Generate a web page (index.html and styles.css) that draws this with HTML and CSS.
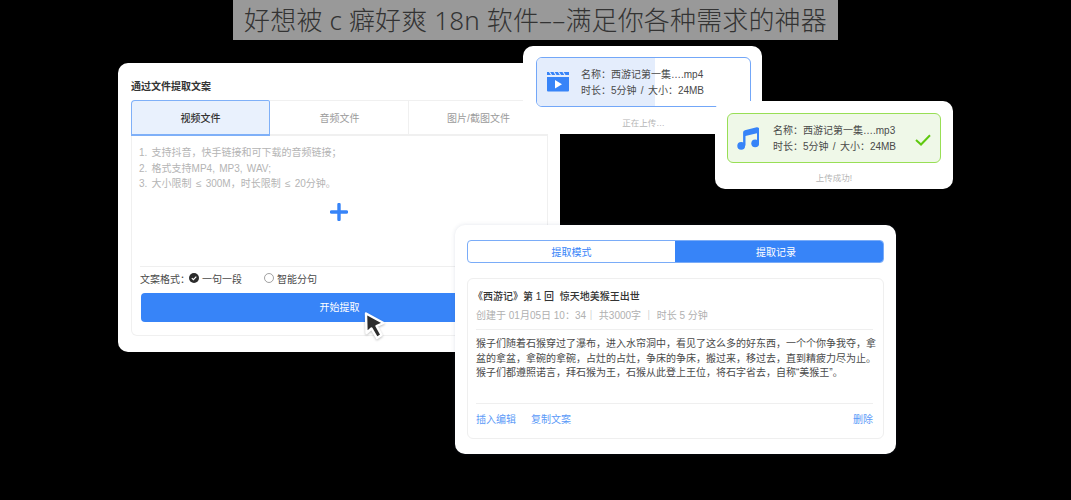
FILE: index.html
```html
<!DOCTYPE html>
<html lang="zh">
<head>
<meta charset="utf-8">
<title>软件</title>
<link rel="stylesheet" href="styles.css">
</head>
<body>
<div class="canvas">
  <div class="banner"><h1 class="banner-text">好想被 c 癖好爽 18n 软件––满足你各种需求的神器</h1></div>

  <section class="card card-main">
    <h2 class="main-title">通过文件提取文案</h2>
    <div class="panel">
      <div class="tabs">
        <div class="tab tab-active">视频文件</div>
        <div class="tab">音频文件</div>
        <div class="tab">图片/截图文件</div>
      </div>
      <div class="panel-body">
        <ol class="hints">
          <li>1. 支持抖音，快手链接和可下载的音频链接；</li>
          <li>2. 格式支持MP4, MP3, WAV;</li>
          <li>3. 大小限制 ≤ 300M，时长限制 ≤ 20分钟。</li>
        </ol>
        <div class="plus-area">
          <svg class="plus" width="18" height="18" viewBox="0 0 18 18"><path d="M9 1.500v15M1.500 9h15" stroke="#3784f8" stroke-width="3.400" stroke-linecap="round" fill="none"/></svg>
        </div>
        <div class="format">
          <span class="format-label">文案格式：</span>
          <span class="radio-item radio-first">
            <svg width="10" height="10" viewBox="0 0 10 10"><circle cx="5" cy="5" r="5" fill="#2b2b2b"/><path d="M2.800 5.100l1.600 1.600 2.900-3" stroke="#fff" stroke-width="1.200" fill="none"/></svg>
            一句一段
          </span>
          <span class="radio-item">
            <svg width="10" height="10" viewBox="0 0 10 10"><circle cx="5" cy="5" r="4.500" fill="#fff" stroke="#8a8a8a" stroke-width=".8"/></svg>
            智能分句
          </span>
        </div>
        <div class="start-btn">开始提取</div>
      </div>
    </div>
  </section>

  <svg class="cursor" width="26" height="32" viewBox="0 0 26 32">
    <path d="M4 3.500l17.500 9.500-7 3 5 9-4.500 3-5.500-9.500-5 4.500z" fill="#2c2c2c" stroke="#fff" stroke-width="2.400" stroke-linejoin="round"/>
  </svg>

  <section class="card card-upload card-video">
    <div class="file file-blue">
      <div class="file-progress"></div>
      <svg class="file-icon" width="22" height="21" viewBox="0 0 22 21">
        <path d="M0 6h22v13.500a1 1 0 0 1-1 1H1a1 1 0 0 1-1-1z" fill="#3784f8"/>
        <path d="M0 1h22v3H0z" fill="#3784f8"/>
        <path d="M2.500 1l2 3M7 1l2 3M11.500 1l2 3M16 1l2 3" stroke="#e8f0fd" stroke-width="1.100"/>
        <path d="M8 9l7 4.200-7 4.200z" fill="#fff"/>
      </svg>
      <div class="file-text">
        <div>名称：西游记第一集….mp4</div>
        <div>时长：5分钟 / 大小：24MB</div>
      </div>
    </div>
    <div class="upload-state">正在上传…</div>
  </section>

  <section class="card card-upload card-audio">
    <div class="file file-green">
      <svg class="file-icon" width="22" height="23" viewBox="0 0 22 23">
        <path d="M7.300 18.500V5.500a1 1 0 0 1 .8-1L20 1.500a1 1 0 0 1 1.200 1V16" stroke="#3784f8" stroke-width="2.400" fill="none"/>
        <path d="M7.300 4.500L21 1.200V6L7.300 9.200z" fill="#3784f8"/>
        <circle cx="4.200" cy="18.800" r="3.900" fill="#3784f8"/>
        <circle cx="18.200" cy="16.300" r="3.900" fill="#3784f8"/>
      </svg>
      <div class="file-text">
        <div>名称：西游记第一集….mp3</div>
        <div>时长：5分钟 / 大小：24MB</div>
      </div>
      <svg class="check" width="16" height="12" viewBox="0 0 16 12"><path d="M1 6l5 4.500L15 1.200" stroke="#5fc90f" stroke-width="2" fill="none"/></svg>
    </div>
    <div class="upload-state">上传成功!</div>
  </section>

  <section class="card card-record">
    <div class="switch">
      <div class="switch-item">提取模式</div>
      <div class="switch-item switch-on">提取记录</div>
    </div>
    <article class="record">
      <h3 class="record-title">《西游记》第 1 回&nbsp;&nbsp;惊天地美猴王出世</h3>
      <p class="record-meta">创建于 01月05日 10：34｜ 共3000字 ｜ 时长 5 分钟</p>
      <p class="record-body">猴子们随着石猴穿过了瀑布，进入水帘洞中，看见了这么多的好东西，一个个你争我夺，拿盆的拿盆，拿碗的拿碗，占灶的占灶，争床的争床，搬过来，移过去，直到精疲力尽为止。猴子们都遵照诺言，拜石猴为王，石猴从此登上王位，将石字省去，自称“美猴王”。</p>
      <div class="record-actions">
        <span class="action">插入编辑</span>
        <span class="action">复制文案</span>
        <span class="action action-end">删除</span>
      </div>
    </article>
  </section>
</div>
</body>
</html>
```

FILE: styles.css
```css
* { box-sizing: border-box; margin: 0; padding: 0; }
html, body { width: 1071px; height: 500px; overflow: hidden; background: #000; }
body, .canvas {
  font-family: "Liberation Sans", "Noto Sans CJK SC", sans-serif;
}
.canvas { position: relative; width: 1071px; height: 500px; background: #000; overflow: hidden; }

.banner {
  position: absolute; left: 233px; top: 0; width: 605px; height: 40px;
  background: #999; display: flex; align-items: center; justify-content: center;
}
.banner-text {
  font-family: "Noto Sans", "Noto Sans CJK SC", sans-serif;
  font-size: 26px; font-weight: 300; color: #333; white-space: nowrap; line-height: 40px; letter-spacing: .15px;
}

.card { position: absolute; background: #fff; border-radius: 10px; }

.card-main { left: 118px; top: 63px; width: 442px; height: 289px; padding: 17px 12px 17px 13px; }
.main-title { font-size: 10px; font-weight: 700; color: #333; line-height: 13px; height: 20px; }
.panel { width: 417px; }
.tabs { display: grid; grid-template-columns: repeat(3, 139px); height: 36px; }
.tab {
  display: flex; align-items: center; justify-content: center;
  font-size: 10px; color: #9b9b9b; padding-bottom: 1px; padding-left: 1px;
  border: 1px solid #f0f0f0; border-left: 0; border-bottom: 2px solid #f0f0f0;
}
.tab-active {
  background: #e9f1fd; color: #333; font-weight: 500; padding-left: 0;
  border: 1px solid #7fb0f8; border-bottom-width: 2px; border-top-left-radius: 4px; border-top-right-radius: 2px;
}
.panel-body {
  height: 201px; padding: 10px 9px 11px 8px; margin-top: -1px;
  border: 1px solid #f0f0f0; border-top: 0; border-radius: 0 0 6px 6px;
  display: flex; flex-direction: column;
}
.hints { list-style: none; font-size: 10px; line-height: 15.600px; color: #b4b4b4; word-spacing: 1.500px; margin-left: -1px; }
.plus-area { height: 74px; padding-top: 11px; display: flex; justify-content: center; align-items: flex-start; }
.format {
  display: flex; align-items: center; height: 24px; border-top: 1px solid #efefef;
  font-size: 10px; color: #4a4a4a; margin-bottom: 3px;
}
.radio-item { display: flex; align-items: center; gap: 3px; }
.radio-first { margin-right: 22px; margin-left: -1px; }
.start-btn {
  margin-left: 1px; height: 29px; width: 397px; border-radius: 4px; background: #3784f8; color: #fff;
  font-size: 10px; display: flex; align-items: center; justify-content: center; padding-bottom: 1px;
}

.cursor { position: absolute; left: 362px; top: 310px; filter: drop-shadow(0 1px 1px rgba(0,0,0,.25)); }

.card-upload { width: 239px; height: 88px; padding: 11px 12px 0; }
.card-video { left: 523px; top: 46px; padding-left: 13px; padding-right: 11px; }
.card-audio { left: 715px; top: 101px; width: 238px; padding-top: 12px; }
.file {
  position: relative; height: 50px; border-radius: 6px; display: flex; align-items: center;
  padding-left: 11px; overflow: hidden;
}
.file-blue { border: 1px solid #73a7f8; }
.file-green { border: 1px solid #98df55; background: #eff8e8; }
.file-progress { position: absolute; left: 0; top: 0; bottom: 0; width: 118px; background: #e4edfc; }
.file-icon { position: relative; flex: none; }
.file-text { position: relative; font-size: 10px; line-height: 15.500px; color: #4a4a4a; white-space: nowrap; word-spacing: 1.500px; padding-top: 1px; }
.card-video .file-icon { margin-left: -1px; margin-top: -1px; }
.card-video .file-text { margin-left: 12px; }
.card-audio .file-icon { margin-left: -2px; }
.card-audio .file-text { margin-left: 14px; }
.check { position: absolute; right: 9px; top: 20px; }
.upload-state { text-align: center; font-size: 8.500px; color: #b5b5b5; line-height: 12px; margin-top: 10px; }
.card-audio .upload-state { margin-top: 9px; }

.card-record { left: 455px; top: 225px; width: 441px; height: 229px; padding: 15px 12px; box-shadow: 0 0 4px rgba(60,80,120,.15); }
.switch {
  display: grid; grid-template-columns: 207px 1fr; height: 23px; border-radius: 4px;
  border: 1px solid #7aacf8; overflow: hidden; width: 417px;
}
.switch-item { display: flex; align-items: center; justify-content: center; font-size: 10px; color: #3784f8; font-weight: 400; }
.switch-on { background: #3784f8; color: #fff; padding-right: 6px; }
.record {
  margin-top: 15px; width: 417px; height: 161px; border: 1px solid #efefef; border-radius: 6px;
  padding: 10px 9px 0 8px; display: flex; flex-direction: column;
}
.record-title { font-size: 10px; font-weight: 500; color: #333; line-height: 16px; margin-left: -3px; }
.record-meta {
  font-size: 10px; color: #b0b0b0; line-height: 16px; margin-top: 3px; padding-bottom: 5px;
  border-bottom: 1px solid #efefef; width: 397px; white-space: nowrap;
}
.record-body {
  font-size: 10px; color: #4a4a4a; line-height: 14.500px; height: 73px; padding-top: 7px; width: 402px;
}
.record-actions {
  display: flex; gap: 15px; width: 397px; height: 33px; border-top: 1px solid #efefef; align-items: center;
  font-size: 10px; color: #5b9af8; padding-bottom: 3px;
}
.action-end { margin-left: auto; }
```
